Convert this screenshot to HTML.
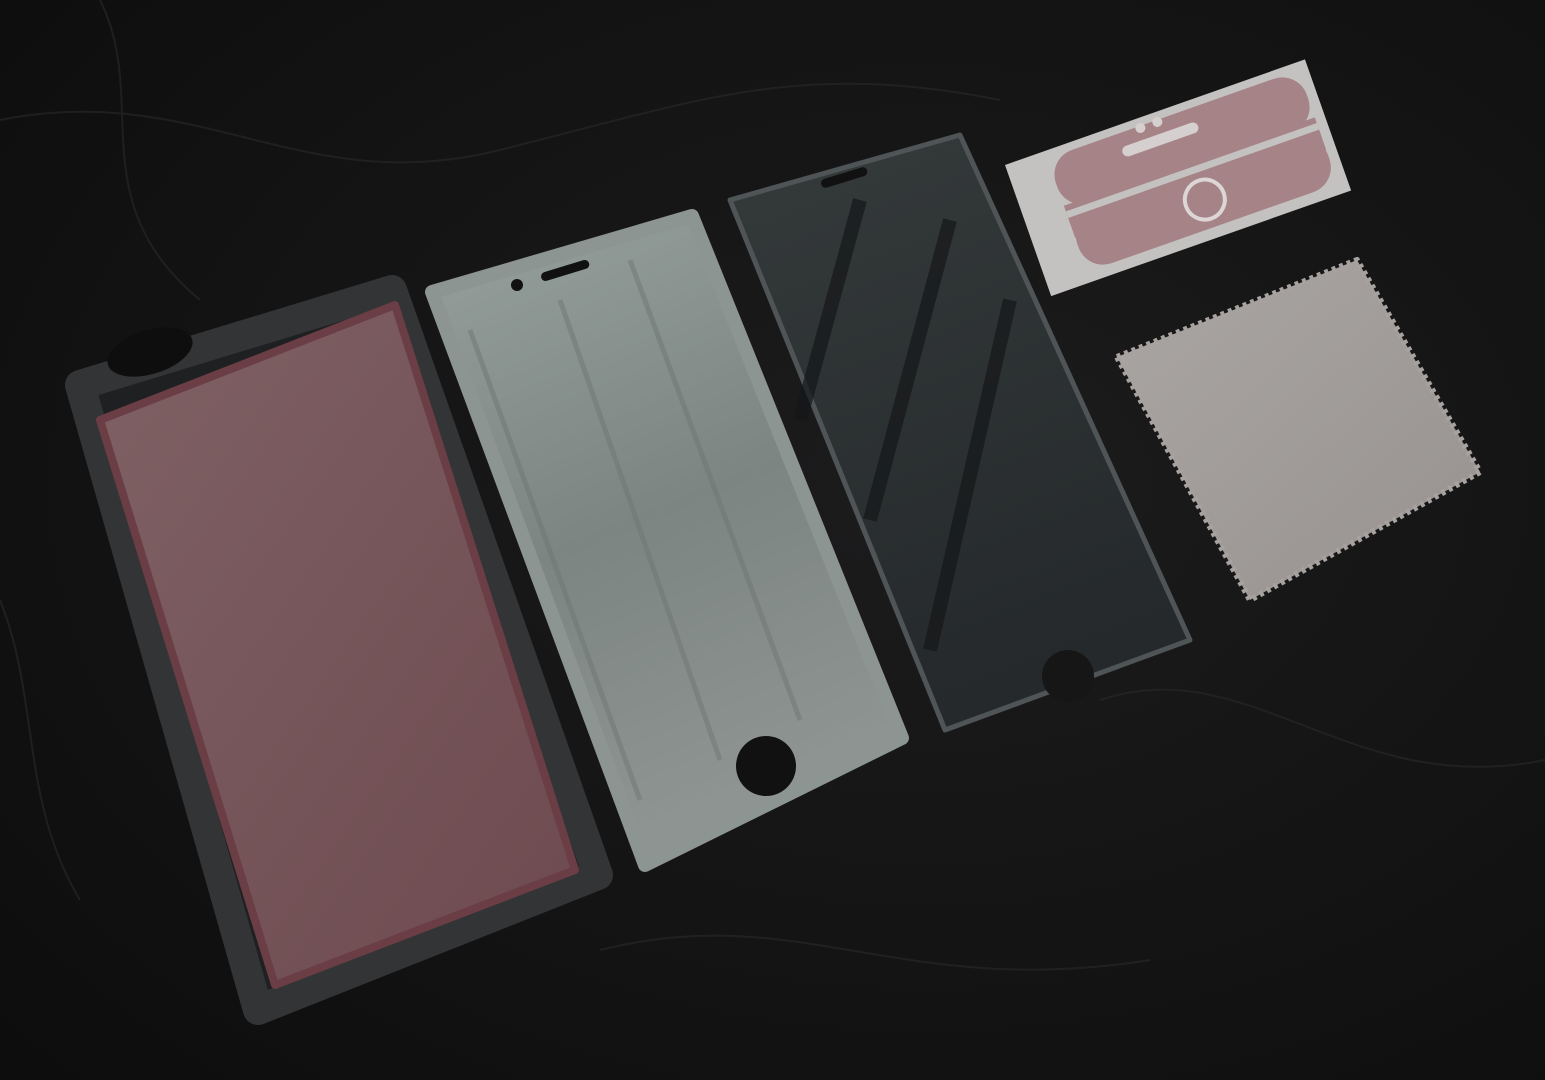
<!DOCTYPE html>
<html><head><meta charset="utf-8">
<style>
html,body{margin:0;padding:0;background:#121212;width:1545px;height:1080px;overflow:hidden}
svg{display:block}
</style></head>
<body>
<svg width="1545" height="1080" viewBox="0 0 1545 1080" xmlns="http://www.w3.org/2000/svg">
<defs>
<radialGradient id="bg" cx="0.6" cy="0.45" r="0.8">
<stop offset="0" stop-color="#1c1c1d"/><stop offset="1" stop-color="#0d0d0d"/>
</radialGradient>
<linearGradient id="pink" x1="0" y1="0" x2="1" y2="1">
<stop offset="0" stop-color="#7f6164"/><stop offset="1" stop-color="#6d4a4f"/>
</linearGradient>
<linearGradient id="glass1" x1="0" y1="0" x2="0.3" y2="1">
<stop offset="0" stop-color="#96a09c"/><stop offset="0.55" stop-color="#7c8582"/><stop offset="1" stop-color="#8e9492"/>
</linearGradient>
<linearGradient id="glass2" x1="0" y1="0" x2="0.3" y2="1">
<stop offset="0" stop-color="#353a3b"/><stop offset="1" stop-color="#25292b"/>
</linearGradient>
<linearGradient id="cloth" x1="0" y1="0" x2="1" y2="1">
<stop offset="0" stop-color="#aaa6a4"/><stop offset="1" stop-color="#97928f"/>
</linearGradient>
</defs>
<rect width="1545" height="1080" fill="url(#bg)"/>
<g stroke="#262627" stroke-width="2" fill="none" opacity="0.7">
<path d="M0 120 C200 80 300 200 500 150 S800 60 1000 100"/>
<path d="M100 0 C150 100 80 200 200 300"/>
<path d="M1100 700 C1250 650 1350 800 1545 760"/>
<path d="M600 950 C800 900 900 1000 1150 960"/>
<path d="M0 600 C40 700 20 800 80 900"/>
</g>
<!-- phone case -->
<polygon points="80,385 392,290 598,875 258,1010" fill="#1f2022" stroke="#333436" stroke-width="30" stroke-linejoin="round"/>
<polygon points="100,420 395,305 575,870 275,985" fill="url(#pink)" stroke="#6a3e44" stroke-width="8" stroke-linejoin="round"/>
<ellipse cx="150" cy="352" rx="44" ry="22" fill="#0e0e0e" transform="rotate(-17 150 352)"/>
<!-- glass 1 -->
<polygon points="432,292 692,216 902,738 645,865" fill="url(#glass1)" stroke="#8d9592" stroke-width="14" stroke-linejoin="round"/>
<g stroke="#6f7774" stroke-width="5" opacity="0.5">
<line x1="470" y1="330" x2="640" y2="800"/><line x1="560" y1="300" x2="720" y2="760"/><line x1="630" y1="260" x2="800" y2="720"/>
</g>
<circle cx="517" cy="285" r="6" fill="#111"/>
<rect x="540" y="266" width="50" height="9" rx="4.5" fill="#111" transform="rotate(-17 565 270)"/>
<circle cx="766" cy="766" r="30" fill="#111"/>
<!-- glass 2 -->
<polygon points="730,200 960,135 1190,640 945,730" fill="url(#glass2)" stroke="#4f5456" stroke-width="5" stroke-linejoin="round"/>
<g stroke="#151719" stroke-width="14" opacity="0.7">
<line x1="860" y1="200" x2="800" y2="420"/><line x1="950" y1="220" x2="870" y2="520"/><line x1="1010" y1="300" x2="930" y2="650"/>
</g>
<rect x="820" y="173" width="48" height="9" rx="4.5" fill="#111" transform="rotate(-17 844 177)"/>
<circle cx="1068" cy="676" r="26" fill="#161616"/>
<!-- sticker card -->
<g transform="translate(1005,165) rotate(-19.4)">
<rect x="0" y="0" width="318" height="139" fill="#c4c2c1"/>
<rect x="42" y="8" width="266" height="56" rx="26" fill="#a58386"/>
<rect x="42" y="58" width="266" height="20" fill="#a58386"/>
<rect x="42" y="72" width="266" height="56" rx="26" fill="#a58386"/>
<rect x="42" y="72" width="266" height="20" fill="#a58386"/>
<rect x="42" y="64" width="266" height="7" fill="#c4c2c1"/>
<rect x="115" y="22" width="80" height="11" rx="5.5" fill="#d6cfcf"/>
<circle cx="140" cy="10" r="5" fill="#d6cfcf"/>
<circle cx="158" cy="10" r="5" fill="#d6cfcf"/>
<circle cx="177" cy="99" r="20" fill="none" stroke="#ddd6d6" stroke-width="4"/>
</g>
<!-- cloth -->
<polygon points="1117,357 1357,260 1480,472 1250,600" fill="url(#cloth)" stroke="#a7a29f" stroke-width="6" stroke-dasharray="4 4" stroke-linejoin="round"/>
</svg>
</body></html>
